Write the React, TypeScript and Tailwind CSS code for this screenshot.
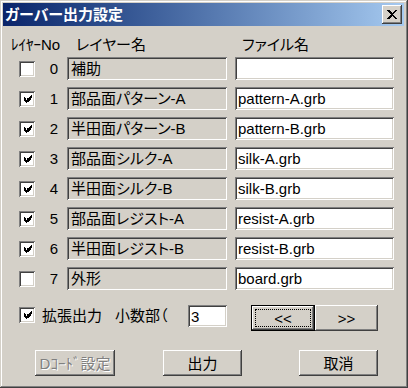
import React from "react"

const raised =
  "shadow-[inset_-1px_-1px_#404040,inset_1px_1px_#ffffff,inset_-2px_-2px_#808080,inset_2px_2px_#d4d0c8]"
const sunken =
  "shadow-[inset_1px_1px_#808080,inset_-1px_-1px_#ffffff,inset_2px_2px_#404040,inset_-2px_-2px_#d4d0c8]"

const rows = [
  { no: 0, name: "補助", file: "", on: false },
  { no: 1, name: "部品面パターン-A", file: "pattern-A.grb", on: true },
  { no: 2, name: "半田面パターン-B", file: "pattern-B.grb", on: true },
  { no: 3, name: "部品面シルク-A", file: "silk-A.grb", on: true },
  { no: 4, name: "半田面シルク-B", file: "silk-B.grb", on: true },
  { no: 5, name: "部品面レジスト-A", file: "resist-A.grb", on: true },
  { no: 6, name: "半田面レジスト-B", file: "resist-B.grb", on: true },
  { no: 7, name: "外形", file: "board.grb", on: false },
]

function Check({ on }: { on: boolean }) {
  // classic 7x7 pixel check mark
  const cols = [2, 3, 4, 3, 2, 1, 0]
  return (
    <div className={`w-[16px] h-[16px] bg-white flex items-center justify-center shrink-0 ${sunken}`}>
      {on && (
        <svg width="8" height="8" viewBox="0 0 7 7" shapeRendering="crispEdges" className="ml-[1px]">
          {cols.map((y, x) => (
            <rect key={x} x={x} y={y} width="1" height="3" fill="#000" />
          ))}
        </svg>
      )}
    </div>
  )
}

function Btn({ children, className = "", focus = false, disabled = false }: {
  children: React.ReactNode
  className?: string
  focus?: boolean
  disabled?: boolean
}) {
  return (
    <div
      className={`relative h-[26px] flex items-center justify-center bg-[#d4d0c8] ${
        focus ? "border border-black shadow-[inset_-1px_-1px_#404040,inset_1px_1px_#ffffff,inset_-2px_-2px_#808080]" : raised
      } ${className}`}
    >
      {focus && <div className="absolute inset-[3px] border border-dotted border-black" />}
      <span className={disabled ? "text-[#808080] [text-shadow:1px_1px_0_#ffffff]" : "text-black"}>{children}</span>
    </div>
  )
}

export default function App() {
  return (
    <div className="w-[408px] h-[388px] bg-[#d4d0c8] pt-[3px] pl-[3px] pr-[4px] text-[15px] leading-none text-black [font-family:'Liberation_Sans','Noto_Sans_CJK_JP',sans-serif] [font-feature-settings:'palt'] shadow-[inset_-1px_-1px_#404040,inset_1px_1px_#d4d0c8,inset_-2px_-2px_#808080,inset_2px_2px_#ffffff]">
      {/* Title bar */}
      <div className="h-[23px] flex items-center justify-between bg-linear-to-r from-[#0a246a] to-[#a6caf0]">
        <span className="pl-[2px] text-white font-bold text-[15px]">ガーバー出力設定</span>
        <div className={`w-[20px] h-[19px] mr-[2px] bg-[#d4d0c8] flex items-center justify-center ${raised}`}>
          <svg width="10" height="9" viewBox="0 0 10 9" shapeRendering="crispEdges">
            <path d="M0 0h2l3 3l3-3h2l-4 4.5l4 4.5h-2l-3-3l-3 3h-2l4-4.5z" fill="#000" />
          </svg>
        </div>
      </div>

      {/* Body */}
      <div className="pl-[16px] flex flex-col">
        {/* Header */}
        <div className="flex items-center h-[18px] mt-[9px]">
          <span className="w-[65px] -ml-[8px] [font-feature-settings:normal]">ﾚｲﾔｰNo</span>
          <span className="w-[166px]">レイヤー名</span>
          <span>ファイル名</span>
        </div>

        <div className="flex flex-col gap-[7px] mt-[4px]">
          {rows.map((r) => (
            <div key={r.no} className="flex items-center h-[23px]">
              <Check on={r.on} />
              <span className="w-[23px] text-right">{r.no}</span>
              <div className={`ml-[9px] w-[160px] h-[23px] flex items-center px-[4px] bg-[#d4d0c8] ${sunken}`}>{r.name}</div>
              <div className={`ml-[8px] w-[159px] h-[23px] flex items-center px-[3px] bg-white ${sunken}`}>{r.file}</div>
            </div>
          ))}
        </div>

        {/* Options row */}
        <div className="flex items-start mt-[15px]">
          <div className="mt-[2px]">
            <Check on={true} />
          </div>
          <span className="w-[80px] pl-[7px] mt-[3px]">拡張出力</span>
          <span className="w-[73px] mt-[3px]">小数部（</span>
          <div className={`w-[39px] h-[22px] bg-white flex items-center px-[3px] ${sunken}`}>3</div>
          <Btn focus className="ml-[24px] w-[64px]">&lt;&lt;</Btn>
          <Btn className="w-[63px]">&gt;&gt;</Btn>
        </div>

        {/* Buttons */}
        <div className="flex mt-[19px]">
          <Btn disabled className="ml-[16px] w-[80px]">Dｺｰﾄﾞ設定</Btn>
          <Btn className="ml-[48px] w-[79px]">出力</Btn>
          <Btn className="ml-[57px] w-[79px]">取消</Btn>
        </div>
      </div>
    </div>
  )
}
